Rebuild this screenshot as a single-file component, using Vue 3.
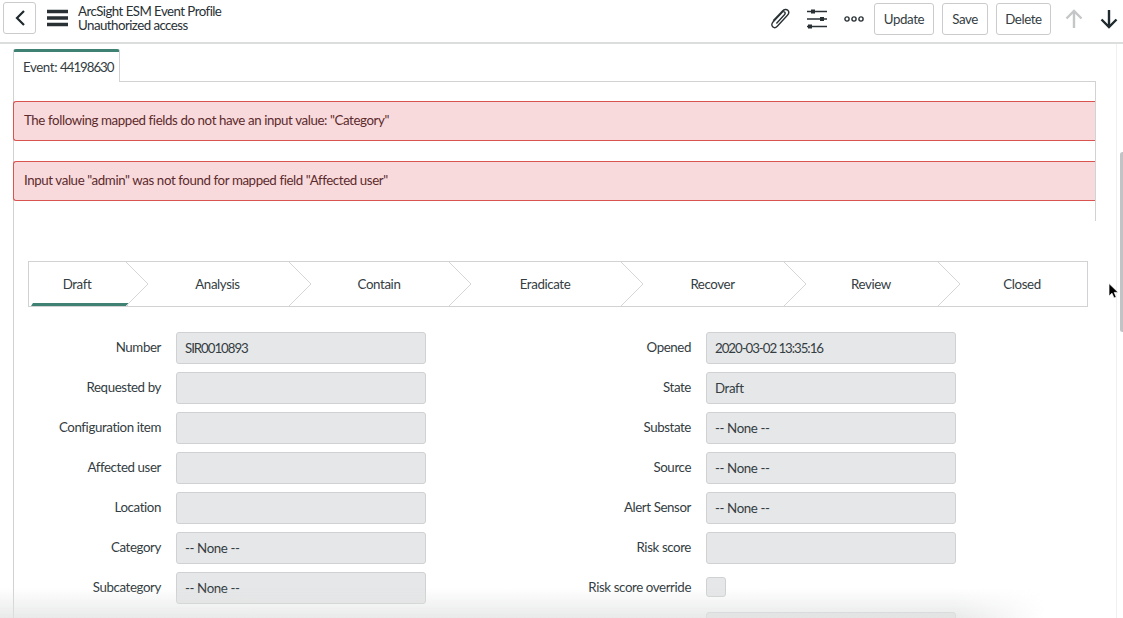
<script setup>
const steps = [
  { name: 'Draft', w: 98, first: true },
  { name: 'Analysis', w: 163 },
  { name: 'Contain', w: 160 },
  { name: 'Eradicate', w: 172 },
  { name: 'Recover', w: 163 },
  { name: 'Review', w: 154 },
  { name: 'Closed', w: 149, last: true },
]
const left = [
  ['Number', 'SIR0010893'],
  ['Requested by', ''],
  ['Configuration item', ''],
  ['Affected user', ''],
  ['Location', ''],
  ['Category', '-- None --'],
  ['Subcategory', '-- None --'],
]
const right = [
  ['Opened', '2020-03-02 13:35:16'],
  ['State', 'Draft'],
  ['Substate', '-- None --'],
  ['Source', '-- None --'],
  ['Alert Sensor', '-- None --'],
  ['Risk score', ''],
]
</script>

<template>
  <div class="page">
    <header class="top">
      <button class="btn back" aria-label="Back">
        <svg width="12" height="18" viewBox="0 0 12 18"><path d="M10 2 3 9l7 7" fill="none" stroke="#1f2a2e" stroke-width="2.2"/></svg>
      </button>
      <svg class="menu" width="21" height="18" viewBox="0 0 21 18"><path d="M0 2.5h21M0 9h21M0 15.5h21" stroke="#293135" stroke-width="3.4"/></svg>
      <div class="titles">
        <div>ArcSight ESM Event Profile</div>
        <div>Unauthorized access</div>
      </div>
      <div class="spacer"></div>
      <svg class="ic clip" width="22" height="22" viewBox="0 0 22 22"><path d="M4.2 12.8 13.5 3c1.7-1.8 4-2 5.3-.7s1.1 3.5-.6 5.3L8.3 18.2c-1.4 1.5-3.3 1.8-4.6.6s-1.1-3.2.3-4.7l9-9.7c.8-.9 1.9-1 2.6-.3s.6 1.8-.2 2.7l-8 8.6" fill="none" stroke="#293135" stroke-width="1.4"/></svg>
      <svg class="ic sliders" width="20" height="20" viewBox="0 0 20 20"><path d="M0 2.5h20M0 10h20M0 17.5h20" stroke="#293135" stroke-width="1.6"/><rect x="4" y=".5" width="4" height="4" fill="#293135"/><rect x="13" y="8" width="4" height="4" fill="#293135"/><rect x="1" y="15.5" width="4" height="4" fill="#293135"/></svg>
      <svg class="ic more" width="20" height="6" viewBox="0 0 20 6"><circle cx="3" cy="3" r="2.1" fill="none" stroke="#293135" stroke-width="1.4"/><circle cx="10" cy="3" r="2.1" fill="none" stroke="#293135" stroke-width="1.4"/><circle cx="17" cy="3" r="2.1" fill="none" stroke="#293135" stroke-width="1.4"/></svg>
      <button class="btn act update">Update</button>
      <button class="btn act save">Save</button>
      <button class="btn act del">Delete</button>
      <svg class="arrow up" width="18" height="20" viewBox="0 0 18 20"><path d="M9 19V2M1.5 9.5 9 2l7.5 7.5" fill="none" stroke="#c4c6c7" stroke-width="2.4"/></svg>
      <svg class="arrow down" width="18" height="20" viewBox="0 0 18 20"><path d="M9 1v17M1.5 10.5 9 18l7.5-7.5" fill="none" stroke="#1f2a2e" stroke-width="2.4"/></svg>
    </header>

    <main class="body">
      <div class="tab">Event: <span class="num">44198630</span></div>
      <div class="panel">
        <div class="frame">
          <div class="alert">The following mapped fields do not have an input value: "Category"</div>
          <div class="alert">Input value "admin" was not found for mapped field "Affected user"</div>
        </div>

        <div class="stepper">
          <div v-for="s in steps" :key="s.name" class="step" :class="{ first: s.first, last: s.last }" :style="{ width: s.w + 'px' }">
            <span>{{ s.name }}</span>
            <svg v-if="!s.last" class="chev" width="23" height="44" viewBox="0 0 23 44"><path d="M0 0l22 22L0 44" fill="none" stroke="#d4d6d7" stroke-width="1"/></svg>
          </div>
        </div>

        <div class="form">
          <div class="col left">
            <div v-for="r in left" :key="r[0]" class="row">
              <label>{{ r[0] }}</label>
              <div class="input" :class="{ num: r[0] === 'Number' }">{{ r[1] }}</div>
            </div>
          </div>
          <div class="col right">
            <div v-for="r in right" :key="r[0]" class="row">
              <label>{{ r[0] }}</label>
              <div class="input" :class="{ num: r[0] === 'Opened' }">{{ r[1] }}</div>
            </div>
            <div class="row">
              <label>Risk score override</label>
              <div class="check"></div>
            </div>
            <div class="row">
              <label></label>
              <div class="input"></div>
            </div>
          </div>
        </div>
      </div>
    </main>

    <div class="fade"></div>
    <div class="track"><div class="thumb"></div></div>
    <svg class="cursor" width="11" height="16" viewBox="0 0 11 16"><path d="M1 .5v12.5l3-2.8 2 4.8 2.2-1-2-4.6h4z" fill="#000" stroke="#fff" stroke-width=".7"/></svg>
  </div>
</template>

<style>
html, body { margin: 0; background: #fff; overflow: hidden; }
</style>

<style scoped>
.page {
  position: relative;
  width: 1123px;
  height: 618px;
  overflow: hidden;
  background: #fff;
  color: #343d42;
  font-family: Lato, sans-serif;
  font-size: 13.3px;
  letter-spacing: -0.4px;
}
.num { letter-spacing: -1.05px; }
.top {
  height: 44px;
  box-sizing: border-box;
  border-bottom: 2px solid #dcdddd;
  display: flex;
  align-items: center;
  padding: 0 4px 0 3px;
}
.btn {
  box-sizing: border-box;
  height: 32px;
  background: #fff;
  border: 1px solid #c9cbcc;
  border-radius: 3px;
  font: inherit;
  letter-spacing: inherit;
  color: #343d42;
  padding: 0;
  display: flex;
  align-items: center;
  justify-content: center;
}
.back { width: 33px; margin-top: -6px; }
.menu { margin-left: 11px; margin-top: -6px; }
.titles { margin-left: 10px; margin-top: -6px; line-height: 14px; color: #293135; letter-spacing: -0.55px; }
.spacer { flex: 1; }
.clip { margin-top: -4px; }
.sliders { margin-left: 16px; margin-top: -4px; }
.more { margin-left: 17px; margin-top: -4px; }
.act { margin-top: -5px; }
.update { width: 60px; margin-left: 10px; }
.save { width: 46px; margin-left: 8px; }
.del { width: 55px; margin-left: 8px; }
.arrow { margin-top: -4px; }
.up { margin-left: 14px; }
.down { margin-left: 17px; margin-right: 1px; }

.body { padding: 5px 0 0 13px; }
.tab {
  box-sizing: border-box;
  width: 107px;
  height: 33px;
  border: 1px solid #d0d2d3;
  border-top: 3px solid #3f8273;
  border-bottom: 0;
  border-radius: 3px 3px 0 0;
  padding-left: 9px;
  line-height: 30px;
  white-space: nowrap;
  background: #fff;
  position: relative;
  z-index: 1;
}
.panel {
  margin-top: -1px;
  height: 537px;
  border-left: 1px solid #d0d2d3;
}
.frame {
  box-sizing: border-box;
  width: 1082px;
  height: 140px;
  border-top: 1px solid #d0d2d3;
  border-right: 1px solid #d0d2d3;
  padding-top: 19px;
  display: flex;
  flex-direction: column;
  gap: 20px;
}
.alert {
  box-sizing: border-box;
  height: 40px;
  width: 1082px;
  margin-left: -1px;
  background: #f8dadc;
  border: 1px solid #d9534f;
  border-right: 0;
  border-radius: 3px 0 0 3px;
  padding-left: 10px;
  line-height: 37px;
  color: #5c2a2c;
  position: relative;
}
.stepper {
  box-sizing: border-box;
  display: flex;
  width: 1060px;
  height: 46px;
  margin: 40px 0 0 14px;
  border: 1px solid #d0d2d3;
}
.step {
  position: relative;
  box-sizing: border-box;
  flex: none;
  display: flex;
  align-items: center;
  justify-content: center;
  padding-left: 18px;
  padding-bottom: 1px;
}
.step.first { padding-left: 0; padding-right: 2px; }
.step.last { flex: 1; }
.step.first::after {
  content: "";
  position: absolute;
  left: 2px;
  right: -2px;
  bottom: 0;
  height: 3px;
  background: #3f8273;
  clip-path: polygon(2px 0, 100% 0, calc(100% - 2px) 100%, 0 100%);
}
.chev { position: absolute; right: -22px; top: 0; z-index: 1; }
.form { display: flex; margin-top: 25px; }
.col { display: flex; flex-direction: column; gap: 8px; flex: none; }
.row { display: flex; align-items: center; height: 32px; gap: 15px; }
.row label { text-align: right; flex: none; padding-bottom: 2px; }
.left { width: 412px; }
.left label { width: 147px; }
.right { margin-left: 103px; }
.right label { width: 162px; }
.input {
  box-sizing: border-box;
  width: 250px;
  height: 32px;
  background: #e6e7e8;
  border: 1px solid #cfd1d2;
  border-radius: 3px;
  padding-left: 8px;
  line-height: 30px;
  flex: none;
}
.check {
  box-sizing: border-box;
  width: 20px;
  height: 20px;
  background: #e6e7e8;
  border: 1px solid #cfd1d2;
  border-radius: 3px;
  margin-bottom: 2px;
}
.fade {
  position: absolute;
  left: 0;
  right: 0;
  bottom: 0;
  height: 30px;
  background: linear-gradient(to bottom, rgba(225,226,226,0), rgba(225,226,226,.75));
  -webkit-mask-image: linear-gradient(to right, #000 85%, transparent 93%);
  mask-image: linear-gradient(to right, #000 85%, transparent 93%);
  pointer-events: none;
}
.track {
  position: absolute;
  top: 44px;
  right: 0;
  bottom: 0;
  width: 6px;
  border-left: 1px solid #f0f0f0;
  background: #fff;
}
.thumb {
  position: absolute;
  top: 108px;
  left: 3px;
  width: 5px;
  height: 180px;
  background: #c2c3c4;
  border-radius: 3px;
}
.cursor { position: absolute; left: 1108px; top: 283px; }
</style>
